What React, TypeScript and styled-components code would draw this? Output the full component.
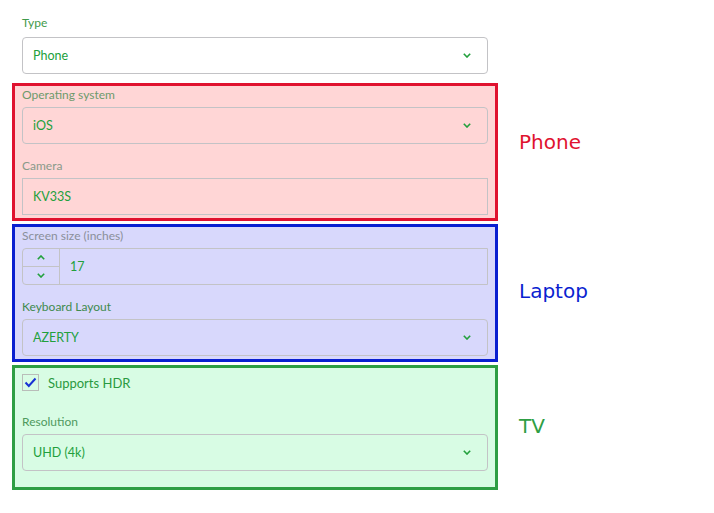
import React from 'react';
import styled, { createGlobalStyle } from 'styled-components';

const GlobalStyle = createGlobalStyle`
  body {
    margin: 0;
    background: #ffffff;
    font-family: Lato, "Noto Sans", sans-serif;
  }
`;

const Page = styled.div`
  display: grid;
  grid-template-columns: 486px auto;
  column-gap: 21px;
  row-gap: 3px;
  padding: 14px 0 0 12px;
`;

const TopField = styled.div`
  display: flex;
  flex-direction: column;
  padding: 0 10px 6px;
`;

const Section = styled.div<{ $border: string; $bg: string; $padBottom?: number }>`
  display: flex;
  flex-direction: column;
  gap: 13px;
  padding: 0 7px ${(p) => p.$padBottom ?? 3}px;
  border: 3px solid ${(p) => p.$border};
  background: ${(p) => p.$bg};
`;

const Tag = styled.div<{ $color: string; $lift: number }>`
  align-self: center;
  padding-bottom: ${(p) => p.$lift}px;
  font-family: "DejaVu Sans", sans-serif;
  font-size: 20px;
  color: ${(p) => p.$color};
`;

const Field = styled.div`
  display: flex;
  flex-direction: column;
`;

const Label = styled.label<{ $color?: string; $gap?: number }>`
  font-size: 12px;
  line-height: 18px;
  margin-bottom: ${(p) => p.$gap ?? 3}px;
  color: ${(p) => p.$color ?? '#5f8d64'};
`;

const Control = styled.div<{ $square?: boolean }>`
  display: flex;
  align-items: center;
  box-sizing: border-box;
  height: 37px;
  padding: 0 16px 0 10px;
  border: 1px solid #c3c3c6;
  border-radius: ${(p) => (p.$square ? 0 : 4)}px;
  font-size: 12.5px;
  color: #22a03c;
`;

const Value = styled.span`
  flex: 1;
`;

const NumberBox = styled.div`
  display: flex;
  box-sizing: border-box;
  height: 37px;
  border: 1px solid #c3c3c6;
  border-radius: 4px 0 0 4px;
  font-size: 12.5px;
  color: #22a03c;
`;

const Stepper = styled.div`
  display: flex;
  flex-direction: column;
  width: 36px;
  border-right: 1px solid #c3c3c6;
`;

const StepButton = styled.div<{ $top?: boolean }>`
  flex: 1;
  display: flex;
  align-items: center;
  justify-content: center;
  border-bottom: ${(p) => (p.$top ? '1px solid #c3c3c6' : 'none')};
`;

const NumberValue = styled.div`
  display: flex;
  align-items: center;
  padding-left: 10px;
`;

const CheckRow = styled.div`
  display: flex;
  align-items: center;
  gap: 9px;
  padding-top: 6px;
  margin-bottom: 9px;
  font-size: 13px;
  color: #2a9a40;
`;

const Box = styled.div`
  width: 17px;
  height: 17px;
  box-sizing: border-box;
  border: 1px solid #b9bdb9;
  display: flex;
  align-items: center;
  justify-content: center;
`;

const Chevron = ({ up }: { up?: boolean }) => (
  <svg width="8" height="5" viewBox="0 0 8 5">
    <polyline
      points={up ? '0.8,4.3 4,1 7.2,4.3' : '0.8,0.8 4,4 7.2,0.8'}
      fill="none"
      stroke="#22a03c"
      strokeWidth="1.6"
    />
  </svg>
);

const Select = ({ value }: { value: string }) => (
  <Control>
    <Value>{value}</Value>
    <Chevron />
  </Control>
);

export default function App() {
  return (
    <>
      <GlobalStyle />
      <Page>
        <TopField>
          <Label $color="#3f9a4b" $gap={5}>
            Type
          </Label>
          <Select value="Phone" />
        </TopField>
        <div />

        <Section $border="#e0122f" $bg="#ffd6d6">
          <Field>
            <Label $color="#6e9a6c">Operating system</Label>
            <Select value="iOS" />
          </Field>
          <Field>
            <Label $color="#8a9a8a">Camera</Label>
            <Control $square>
              <Value>KV33S</Value>
            </Control>
          </Field>
        </Section>
        <Tag $color="#e0122f" $lift={20}>
          Phone
        </Tag>

        <Section $border="#0a1fd0" $bg="#d8d8fc">
          <Field>
            <Label $color="#8a8f9a">Screen size (inches)</Label>
            <NumberBox>
              <Stepper>
                <StepButton $top>
                  <Chevron up />
                </StepButton>
                <StepButton>
                  <Chevron />
                </StepButton>
              </Stepper>
              <NumberValue>17</NumberValue>
            </NumberBox>
          </Field>
          <Field>
            <Label $color="#3f8a4e">Keyboard Layout</Label>
            <Select value="AZERTY" />
          </Field>
        </Section>
        <Tag $color="#0a1fd0" $lift={4}>
          Laptop
        </Tag>

        <Section $border="#2e9e44" $bg="#d8fce4" $padBottom={16}>
          <CheckRow>
            <Box>
              <svg width="13" height="11" viewBox="0 0 13 11">
                <polyline
                  points="1.5,5.5 4.8,9 11.5,1.5"
                  fill="none"
                  stroke="#1832d4"
                  strokeWidth="2"
                />
              </svg>
            </Box>
            Supports HDR
          </CheckRow>
          <Field>
            <Label $color="#4f9a5e">Resolution</Label>
            <Select value="UHD (4k)" />
          </Field>
        </Section>
        <Tag $color="#2e9e44" $lift={4}>
          TV
        </Tag>
      </Page>
    </>
  );
}
